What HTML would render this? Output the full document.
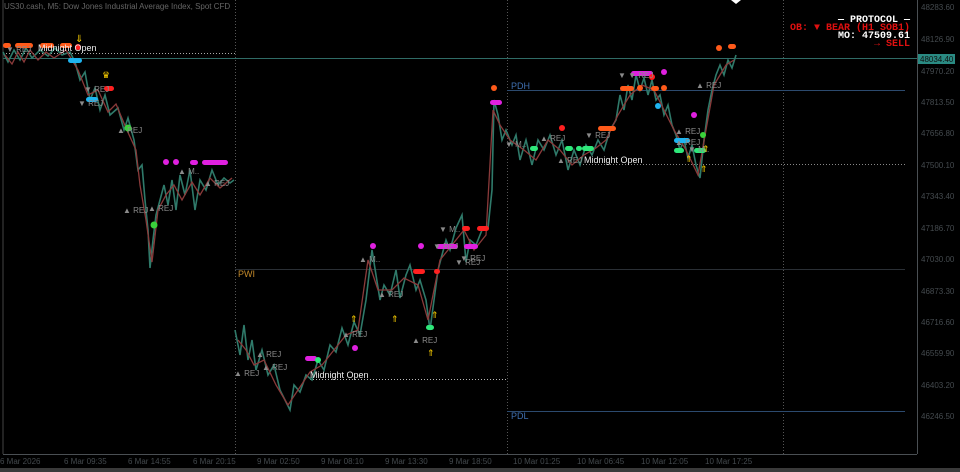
<!DOCTYPE html>
<html><head><meta charset="utf-8"><style>
html,body{margin:0;padding:0;background:#000;width:960px;height:472px;overflow:hidden}
svg{display:block}
text{font-family:"Liberation Sans",sans-serif}
.ax{fill:#444a4e;font-size:8px}
.rj{fill:#8a8a8a;font-size:8px}
.mo{font-family:"Liberation Mono",monospace;font-size:10px;font-weight:bold}
</style></head><body>
<svg width="960" height="472" viewBox="0 0 960 472" xmlns="http://www.w3.org/2000/svg">
<rect width="960" height="472" fill="#000"/>
<line x1="3" y1="0" x2="3" y2="454" stroke="#444" stroke-width="1"/>
<line x1="917.5" y1="0" x2="917.5" y2="454" stroke="#4a4f53"/>
<line x1="3" y1="454.5" x2="917" y2="454.5" stroke="#4a4f53"/>
<rect x="0" y="468" width="960" height="4" fill="#3a3a3a"/>
<g stroke="#555" stroke-dasharray="1,2">
<line x1="235.5" y1="0" x2="235.5" y2="454"/>
<line x1="507.5" y1="0" x2="507.5" y2="454"/>
<line x1="783.5" y1="0" x2="783.5" y2="454"/>
</g>
<line x1="3" y1="58.5" x2="917" y2="58.5" stroke="#2f6b66"/>
<line x1="3" y1="53.5" x2="235" y2="53.5" stroke="#aaa" stroke-dasharray="1,2"/>
<line x1="235" y1="269.5" x2="905" y2="269.5" stroke="#2a2f35"/>
<line x1="507" y1="90.5" x2="905" y2="90.5" stroke="#2c4a6e"/>
<line x1="507" y1="411.5" x2="905" y2="411.5" stroke="#2c4a6e"/>
<line x1="310" y1="379.5" x2="507" y2="379.5" stroke="#bbb" stroke-dasharray="1,2"/>
<line x1="580" y1="164.5" x2="905" y2="164.5" stroke="#888" stroke-dasharray="1,2"/>
<text x="511" y="89" fill="#3f6fb0" font-size="9">PDH</text>
<text x="511" y="419" fill="#3f6fb0" font-size="9">PDL</text>
<text x="238" y="277" fill="#c48a2a" font-size="9">PWI</text>
<polyline fill="none" stroke="#2f7a6a" stroke-width="1.6" points="3,52 8,62 14,50 20,60 26,48 32,58 40,50 48,56 55,48 62,55 70,52 75,62 80,80 85,72 90,100 95,88 100,110 105,95 110,115 118,108 124,130 128,118 134,140 138,170 142,165 145,200 148,230 150,268 153,240 156,215 160,200 164,185 168,205 172,180 176,210 180,175 185,195 190,170 195,210 200,180 206,190 212,170 218,185 224,178 230,183 234,180"/>
<polyline fill="none" stroke="#8a3a3a" stroke-width="1.3" points="5,55 12,64 18,52 24,62 30,50 38,60 46,52 54,58 66,50 78,70 88,95 98,90 108,112 116,104 126,128 136,150 140,185 146,220 152,262 158,210 166,195 174,185 182,200 192,182 200,195 210,178 220,188 232,178"/>
<polyline fill="none" stroke="#2f7a6a" stroke-width="1.6" points="235,330 240,355 244,325 248,360 252,340 256,370 262,350 268,375 274,365 280,390 286,402 290,410 294,385 300,392 306,375 312,380 318,360 324,370 330,345 336,352 342,328 348,345 354,322 360,335 366,300 372,250 376,275 380,300 384,285 390,295 396,270 400,298 406,275 410,265 416,290 420,280 426,300 430,330 434,300 438,270 442,255 446,240 450,250 456,228 462,215 466,262 470,240 476,245 482,230 488,228 492,190 494,100 498,115 502,140 506,130 512,145 516,135 520,160 526,140 532,165 538,140 544,150 550,135 556,155 562,140 568,170 574,150 580,165 586,145 592,155 598,140 604,150 610,130 616,120 620,95 624,110 628,85 632,100 636,75 640,90 644,78 648,95 652,80 656,100 660,95 664,115 668,105 672,125 676,135 680,150 684,140 688,158 692,145 696,165 700,178 704,140 708,110 712,90 716,75 720,65 724,75 728,60 732,68 736,55"/>
<polyline fill="none" stroke="#8a3a3a" stroke-width="1.3" points="238,340 246,350 254,365 264,360 276,385 288,405 298,390 310,372 322,365 334,350 346,335 358,330 368,260 378,290 392,290 404,278 418,285 428,320 440,260 452,245 464,230 474,250 486,235 493,110 500,125 510,140 524,150 536,160 548,140 560,150 572,165 584,155 596,148 606,140 618,115 630,95 642,85 654,90 664,110 674,130 686,150 698,175 706,130 714,85 726,65 734,60"/>
<g>
<rect x="3" y="43" width="8" height="5" rx="2.5" fill="#ff5a1a"/>
<rect x="15" y="43" width="18" height="5" rx="2.5" fill="#ff5a1a"/>
<rect x="40" y="43" width="14" height="5" rx="2.5" fill="#ff5a1a"/>
<rect x="60" y="43" width="12" height="5" rx="2.5" fill="#ff5a1a"/>
<circle cx="78" cy="47" r="3" fill="#ff2020"/>
<text x="75" y="42" fill="#ffd200" font-size="10">⇓</text>
<rect x="68" y="58" width="14" height="5" rx="2.5" fill="#1eb4f0"/>
<text x="102" y="78" fill="#ffd200" font-size="9">♛</text>
<rect x="104" y="86" width="10" height="5" rx="2.5" fill="#ff2020"/>
<rect x="86" y="97" width="12" height="5" rx="2.5" fill="#1eb4f0"/>
<circle cx="128" cy="128" r="3.5" fill="#3ad03a"/>
<circle cx="154" cy="225" r="3.5" fill="#3ad03a"/>
<circle cx="166" cy="162" r="3" fill="#e020e0"/>
<circle cx="176" cy="162" r="3" fill="#e020e0"/>
<rect x="190" y="160" width="8" height="5" rx="2.5" fill="#e020e0"/>
<rect x="202" y="160" width="26" height="5" rx="2.5" fill="#e020e0"/>
<rect x="305" y="356" width="12" height="5" rx="2.5" fill="#e020e0"/>
<circle cx="318" cy="360" r="3" fill="#2ee87a"/>
<circle cx="355" cy="348" r="3" fill="#e020e0"/>
<text x="350" y="322" fill="#ffd200" font-size="9">⇑</text>
<text x="391" y="322" fill="#ffd200" font-size="9">⇑</text>
<circle cx="373" cy="246" r="3" fill="#e020e0"/>
<rect x="413" y="269" width="12" height="5" rx="2.5" fill="#ff2020"/>
<rect x="434" y="269" width="6" height="5" rx="2.5" fill="#ff2020"/>
<circle cx="421" cy="246" r="3" fill="#e020e0"/>
<rect x="436" y="244" width="22" height="5" rx="2.5" fill="#e020e0"/>
<rect x="464" y="244" width="14" height="5" rx="2.5" fill="#e020e0"/>
<rect x="462" y="226" width="8" height="5" rx="2.5" fill="#ff2020"/>
<rect x="477" y="226" width="12" height="5" rx="2.5" fill="#ff2020"/>
<rect x="426" y="325" width="8" height="5" rx="2.5" fill="#2ee87a"/>
<text x="431" y="318" fill="#ffd200" font-size="9">⇑</text>
<text x="427" y="356" fill="#ffd200" font-size="9">⇑</text>
<circle cx="494" cy="88" r="3" fill="#ff5a1a"/>
<rect x="490" y="100" width="12" height="5" rx="2.5" fill="#e020e0"/>
<circle cx="562" cy="128" r="3" fill="#ff2020"/>
<rect x="530" y="146" width="8" height="5" rx="2.5" fill="#2ee87a"/>
<rect x="565" y="146" width="8" height="5" rx="2.5" fill="#2ee87a"/>
<rect x="576" y="146" width="6" height="5" rx="2.5" fill="#2ee87a"/>
<rect x="582" y="146" width="12" height="5" rx="2.5" fill="#2ee87a"/>
<rect x="598" y="126" width="18" height="5" rx="2.5" fill="#ff5a1a"/>
<rect x="631" y="71" width="22" height="5" rx="2.5" fill="#e020e0"/>
<circle cx="664" cy="72" r="3" fill="#e020e0"/>
<circle cx="652" cy="77" r="3" fill="#ff2020"/>
<rect x="620" y="86" width="14" height="5" rx="2.5" fill="#ff5a1a"/>
<circle cx="640" cy="88" r="3" fill="#ff5a1a"/>
<rect x="651" y="86" width="8" height="5" rx="2.5" fill="#ff5a1a"/>
<circle cx="664" cy="88" r="3" fill="#ff5a1a"/>
<circle cx="658" cy="106" r="3" fill="#1eb4f0"/>
<circle cx="694" cy="115" r="3" fill="#e020e0"/>
<rect x="674" y="138" width="16" height="5" rx="2.5" fill="#1eb4f0"/>
<rect x="674" y="148" width="10" height="5" rx="2.5" fill="#2ee87a"/>
<rect x="694" y="148" width="12" height="5" rx="2.5" fill="#2ee87a"/>
<circle cx="703" cy="135" r="3" fill="#3ad03a"/>
<text x="685" y="162" fill="#ffd200" font-size="9">⇑</text>
<text x="700" y="172" fill="#ffd200" font-size="9">⇑</text>
<text x="702" y="152" fill="#ffd200" font-size="9">⇑</text>
<circle cx="719" cy="48" r="3" fill="#ff5a1a"/>
<rect x="728" y="44" width="8" height="5" rx="2.5" fill="#ff5a1a"/>
</g>
<g class="rj">
<text x="6" y="52">▼ REJ</text>
<text x="84" y="92">▼ REJ</text>
<text x="78" y="106">▼ REJ</text>
<text x="117" y="133">▲ REJ</text>
<text x="123" y="213">▲ REJ</text>
<text x="148" y="211">▲ REJ</text>
<text x="178" y="174">▲ M..</text>
<text x="204" y="186">▲ REJ</text>
<text x="234" y="376">▲ REJ</text>
<text x="256" y="357">▲ REJ</text>
<text x="262" y="370">▲ REJ</text>
<text x="342" y="337">▲ REJ</text>
<text x="378" y="297">▲ REJ</text>
<text x="359" y="262">▲ M..</text>
<text x="412" y="343">▲ REJ</text>
<text x="439" y="232">▼ M..</text>
<text x="433" y="249">▼ REJ</text>
<text x="460" y="261">▼ REJ</text>
<text x="455" y="265">▼ REJ</text>
<text x="505" y="147">▼ M..</text>
<text x="540" y="141">▲ REJ</text>
<text x="557" y="163">▲ REJ</text>
<text x="585" y="138">▼ REJ</text>
<text x="618" y="78">▼ ▼ REJ</text>
<text x="675" y="134">▲ REJ</text>
<text x="675" y="145">▲ REJ</text>
<text x="688" y="152">▼ M..</text>
<text x="696" y="88">▲ REJ</text>
</g>
<text x="38" y="51" fill="#eee" font-size="9">Midnight Open</text>
<text x="310" y="378" fill="#eee" font-size="9">Midnight Open</text>
<text x="584" y="163" fill="#eee" font-size="9">Midnight Open</text>
<text x="4" y="9" fill="#666" font-size="8">US30.cash, M5:  Dow Jones Industrial Average Index, Spot CFD</text>
<polygon points="731,0 741,0 736,4" fill="#fff"/>
<text x="910" y="22" class="mo" fill="#fff" text-anchor="end">— PROTOCOL —</text>
<text x="910" y="30" class="mo" fill="#e01010" text-anchor="end">OB: ▼ BEAR (H1 SOB1)</text>
<text x="910" y="38" class="mo" fill="#fff" text-anchor="end">MO: 47509.61</text>
<text x="910" y="46" class="mo" fill="#e01010" text-anchor="end">→ SELL</text>
<g class="ax">
<text x="921" y="10">48283.60</text>
<text x="921" y="42">48126.90</text>
<text x="921" y="74">47970.20</text>
<text x="921" y="105">47813.50</text>
<text x="921" y="136">47656.80</text>
<text x="921" y="168">47500.10</text>
<text x="921" y="199">47343.40</text>
<text x="921" y="231">47186.70</text>
<text x="921" y="262">47030.00</text>
<text x="921" y="294">46873.30</text>
<text x="921" y="325">46716.60</text>
<text x="921" y="356">46559.90</text>
<text x="921" y="388">46403.20</text>
<text x="921" y="419">46246.50</text>
</g>
<rect x="918" y="54" width="37" height="10" fill="#2a8a82"/>
<text x="920" y="62" fill="#111" font-size="8">48034.40</text>
<g class="ax">
<text x="0" y="464">6 Mar 2026</text>
<text x="64" y="464">6 Mar 09:35</text>
<text x="128" y="464">6 Mar 14:55</text>
<text x="193" y="464">6 Mar 20:15</text>
<text x="257" y="464">9 Mar 02:50</text>
<text x="321" y="464">9 Mar 08:10</text>
<text x="385" y="464">9 Mar 13:30</text>
<text x="449" y="464">9 Mar 18:50</text>
<text x="513" y="464">10 Mar 01:25</text>
<text x="577" y="464">10 Mar 06:45</text>
<text x="641" y="464">10 Mar 12:05</text>
<text x="705" y="464">10 Mar 17:25</text>
</g>
</svg>
</body></html>
